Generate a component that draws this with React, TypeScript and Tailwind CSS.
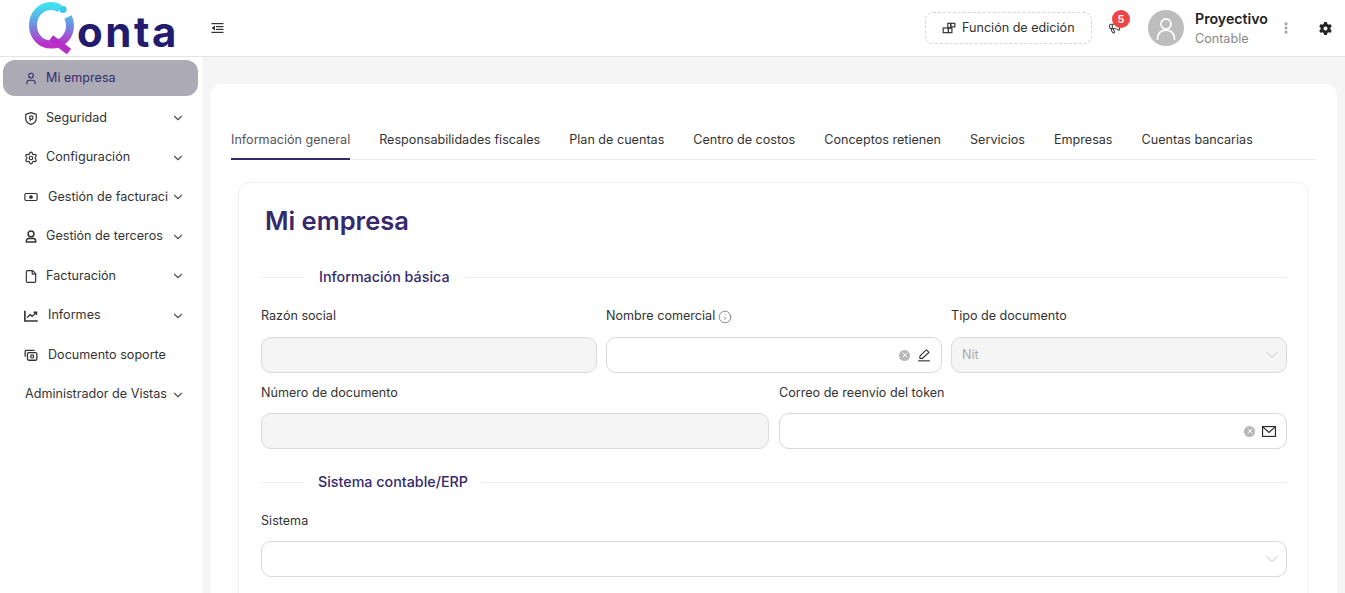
import { ReactNode } from "react";
import { ChevronDown, File, Info, Megaphone, Settings, User, X } from "lucide-react";
import { FaGear } from "react-icons/fa6";

const ShieldIcon = () => (
  <svg width="15" height="15" viewBox="0 0 24 24" fill="none" stroke="currentColor" strokeWidth="2" strokeLinejoin="round" strokeLinecap="round">
    <path d="M12 2 21 5v7c0 5-3.500 8.500-9 10-5.500-1.500-9-5-9-10V5z" />
    <circle cx="12.500" cy="10.500" r="3" />
    <path d="M10.500 16l.8-3" />
  </svg>
);

const BillIcon = () => (
  <svg width="14" height="14" viewBox="0 0 24 24" fill="none" stroke="currentColor" strokeWidth="2">
    <rect x="1.500" y="6" width="21" height="12" rx="2" />
    <circle cx="12" cy="12" r="2.200" fill="currentColor" />
  </svg>
);

const PersonIcon = () => (
  <svg width="15" height="15" viewBox="0 0 24 24" fill="none" stroke="currentColor" strokeWidth="2.600">
    <circle cx="12" cy="7.500" r="5" />
    <path d="M4 21.500v-2a4 4 0 0 1 4-4h8a4 4 0 0 1 4 4v2z" strokeLinejoin="round" />
  </svg>
);

const ChartIcon = () => (
  <svg width="15" height="15" viewBox="0 0 24 24" fill="none" stroke="currentColor" strokeWidth="2.800">
    <path d="M1.500 4v17.500h22" />
    <path d="M5.500 15.500l5-5 3.500 3 6.500-6.500" strokeWidth="2.400" />
    <path d="M16.500 6.500h5v4.500" strokeWidth="2.400" />
  </svg>
);

const CameraStackIcon = () => (
  <svg width="14" height="14" viewBox="0 0 24 24" fill="none" stroke="currentColor" strokeWidth="2.200" strokeLinejoin="round">
    <path d="M2 15V6a2 2 0 0 1 2-2h14" />
    <rect x="6" y="8" width="16" height="13" rx="2" />
    <circle cx="14" cy="14.500" r="2.600" />
  </svg>
);

const BlocksIcon = () => (
  <svg width="14" height="14" viewBox="0 0 24 24" fill="none" stroke="currentColor" strokeWidth="2">
    <rect x="2" y="12" width="9" height="8" />
    <rect x="11" y="12" width="6" height="8" />
    <rect x="10" y="4" width="5" height="8" />
    <rect x="15" y="4" width="7" height="6" />
  </svg>
);

const DotsIcon = () => (
  <svg width="4" height="12" viewBox="0 0 4 12" fill="none" stroke="#6b7280" strokeWidth="0.8">
    <circle cx="2" cy="1.800" r="1.100" />
    <circle cx="2" cy="6" r="1.100" />
    <circle cx="2" cy="10.200" r="1.100" />
  </svg>
);

const CollapseIcon = () => (
  <svg width="13" height="12" viewBox="0 0 13 12" fill="#333333" className="ml-[9px]">
    <rect x="0.500" y="1" width="12" height="1.200" />
    <rect x="5" y="4" width="7.500" height="1.200" />
    <rect x="5" y="6.800" width="7.500" height="1.200" />
    <rect x="0.500" y="9.800" width="12" height="1.200" />
    <path d="M4 3.500v5L0.500 6z" />
  </svg>
);

const PenIcon = () => (
  <svg width="14" height="14" viewBox="0 0 24 24" fill="none" stroke="#222222" strokeWidth="1.800" strokeLinejoin="round" className="ml-[7px]">
    <path d="M2 22h20" />
    <path d="M16 3l4.500 4.500L9 18H5v-4z" />
  </svg>
);

const MailIcon = () => (
  <svg width="14" height="11" viewBox="0 0 14 11" fill="none" stroke="#222222" strokeWidth="1.100" className="ml-[7px]">
    <rect x="0.600" y="0.600" width="12.800" height="9.800" />
    <path d="M0.800 0.800 7 6.500l6.200-5.700" />
  </svg>
);

const AvatarIcon = () => (
  <svg width="26" height="26" viewBox="0 0 26 26" fill="none" stroke="white" strokeWidth="1.800" strokeLinecap="round">
    <circle cx="13" cy="9" r="5" />
    <path d="M4.500 24c0-5.500 3.500-9 8.500-9s8.500 3.500 8.500 9" />
  </svg>
);

const Logo = () => (
  <div className="flex items-center w-[202px] pl-[28px] shrink-0">
    <svg width="50" height="54" viewBox="0 0 50 54" fill="none" className="shrink-0">
      <defs>
        <linearGradient id="qonta" x1="0" y1="0" x2="0" y2="1">
          <stop offset="0" stopColor="#3fe0f0" />
          <stop offset="0.500" stopColor="#6f8fe0" />
          <stop offset="1" stopColor="#c02cc8" />
        </linearGradient>
      </defs>
      <path d="M32 7.500C29 5.800 27 5 23.500 5 12 5 5 14 5 24.500S12.500 43.500 23.500 43.500 42 35 42 24.500c0-3.500-.8-6-2-8.500" stroke="url(#qonta)" strokeWidth="8" />
      <circle cx="35" cy="8.500" r="3.600" fill="#3fc8ee" />
      <path d="M23 37l18 13.500" stroke="#b42fc6" strokeWidth="7" />
    </svg>
    <span className="ml-[-1px] mt-[7px] text-[42px] leading-none font-bold tracking-[2.5px] text-[#231b6e]">onta</span>
  </div>
);

function NavItem({ icon, label, active, chevron = true, tight }: { icon?: ReactNode; label: string; active?: boolean; chevron?: boolean; tight?: boolean }) {
  return (
    <div className={`flex items-center h-9 pl-[21px] pr-[13px] rounded-xl ${active ? "mb-[0.5px] bg-[#acaab5] text-[#352a6b]" : "text-[#333333]"}`}>
      {icon && <span className="flex w-[14px] justify-center shrink-0">{icon}</span>}
      <span className={`flex-1 min-w-0 whitespace-nowrap overflow-hidden ${icon ? (tight ? "ml-[10px]" : "ml-[8px]") : "ml-px"}`}>{label}</span>
      {chevron && <ChevronDown size={14} className="ml-[3px] shrink-0 text-[#555555]" />}
    </div>
  );
}

const Sidebar = () => (
  <aside className="w-[202px] shrink-0 bg-white pl-[3px] pr-[4px] pt-[3px] flex flex-col gap-[3.5px]">
    <NavItem active chevron={false} icon={<User size={15} strokeWidth={1.8} />} label="Mi empresa" />
    <NavItem icon={<ShieldIcon />} label="Seguridad" />
    <NavItem icon={<Settings size={14} />} label="Configuración" />
    <NavItem tight icon={<BillIcon />} label="Gestión de facturación" />
    <NavItem icon={<PersonIcon />} label="Gestión de terceros" />
    <NavItem icon={<File size={15} />} label="Facturación" />
    <NavItem tight icon={<ChartIcon />} label="Informes" />
    <NavItem tight chevron={false} icon={<CameraStackIcon />} label="Documento soporte" />
    <NavItem label="Administrador de Vistas" />
  </aside>
);

const Header = () => (
  <header className="h-[57px] shrink-0 flex items-center bg-white border-b border-[#e3e3e3]">
    <Logo />
    <CollapseIcon />
    <div className="ml-auto flex items-center">
      <div className="flex items-center gap-[6px] h-8 w-[167px] pl-[16px] border border-dashed border-[#d6d6d6] rounded-lg text-[#333333]">
        <BlocksIcon />
        <span>Función de edición</span>
      </div>
      <div className="relative ml-[16px] w-[13px] h-[14px] text-[#444444]">
        <Megaphone size={13} />
        <span className="absolute left-[4px] top-[-11px] flex items-center justify-center w-[18px] h-[18px] rounded-full bg-[#ef4444] text-white text-[11px] font-semibold">5</span>
      </div>
      <div className="ml-[27px] flex items-center justify-center w-9 h-9 rounded-full bg-[#bdbdbd] overflow-hidden">
        <AvatarIcon />
      </div>
      <div className="ml-[11px] pt-px flex flex-col">
        <span className="text-[14.2px] leading-[18px] font-semibold text-[#222222]">Proyectivo</span>
        <span className="leading-[18px] text-[#888888] mt-[2px]">Contable</span>
      </div>
      <span className="ml-[16px] flex"><DotsIcon /></span>
      <FaGear size={13} className="ml-[31px] mr-[13px] text-[#222222]" />
    </div>
  </header>
);

const TABS = [
  "Información general",
  "Responsabilidades fiscales",
  "Plan de cuentas",
  "Centro de costos",
  "Conceptos retienen",
  "Servicios",
  "Empresas",
  "Cuentas bancarias",
];

const Tabs = () => (
  <div className="flex gap-[29px] h-[40px] border-b border-[#ececec] text-[#333333]">
    {TABS.map((t, i) => (
      <div key={t} className={`flex items-center h-[40px] whitespace-nowrap ${i === 0 ? "pt-[2px] border-b-2 border-[#352a6b] text-[#555555]" : ""}`}>
        {t}
      </div>
    ))}
  </div>
);

const SectionTitle = ({ label, pad }: { label: string; pad: string }) => (
  <div className="flex items-center h-5">
    <div className="w-[43px] h-px bg-[#efefef]" />
    <span className={`${pad} text-[14.3px] font-medium text-[#352a6b] whitespace-nowrap`}>{label}</span>
    <div className="flex-1 h-px bg-[#efefef]" />
  </div>
);

const ClearDot = () => (
  <span className="flex items-center justify-center w-[11px] h-[11px] rounded-full bg-[#b8b8b8] text-white">
    <X size={8} strokeWidth={3} />
  </span>
);

function Field({ label, info, disabled, close, children }: { label: string; info?: boolean; disabled?: boolean; close?: boolean; children?: ReactNode }) {
  return (
    <div className="flex flex-col min-w-0">
      <div className="flex items-center gap-[3px] h-5 text-[#333333]">
        {label}
        {info && <Info size={14} strokeWidth={1} className="text-[#444444]" />}
      </div>
      <div className={`${close ? "mt-[9.5px]" : "mt-[10.5px]"} flex items-center justify-end h-9 pl-[10px] pr-[10px] border border-[#d9d9d9] rounded-[10px] ${disabled ? "bg-[#f5f5f5]" : "bg-white"}`}>
        {children}
      </div>
    </div>
  );
}

const SelectChevron = () => <ChevronDown size={20} strokeWidth={1.1} className="mr-[-6px] text-[#bbbbbb]" />;

export default function App() {
  return (
    <div className="h-[593px] w-[1345px] overflow-hidden flex flex-col bg-white text-[12.6px] font-['Inter',sans-serif]">
      <Header />
      <div className="flex flex-1 min-h-0">
        <Sidebar />
        <main className="flex-1 min-w-0 bg-[#f5f5f5] pl-[8px] pr-[8px] pt-[27px]">
          <div className="bg-white rounded-t-xl pl-[21px] pr-[21px] pt-[36px]">
            <Tabs />
            <section className="ml-[7px] mr-[7px] mt-[22px] border border-[#f2f2f2] rounded-xl pl-[22px] pr-[21px] pt-[20px] pb-[60px]">
              <h1 className="ml-[4px] text-[25.5px] leading-[36px] font-semibold text-[#352a6b]">Mi empresa</h1>
              <div className="mt-[28px]">
                <SectionTitle label="Información básica" pad="pl-[15px] pr-[15px]" />
              </div>
              <div className="mt-[19.5px] grid grid-cols-3 gap-x-[9px]">
                <Field label="Razón social" disabled />
                <Field label="Nombre comercial" info>
                  <ClearDot />
                  <PenIcon />
                </Field>
                <Field label="Tipo de documento" disabled>
                  <span className="flex-1 text-[#aaaaaa]">Nit</span>
                  <SelectChevron />
                </Field>
              </div>
              <div className="mt-[10.5px] grid grid-cols-2 gap-x-[10px]">
                <Field close label="Número de documento" disabled />
                <Field close label="Correo de reenvío del token">
                  <ClearDot />
                  <MailIcon />
                </Field>
              </div>
              <div className="mt-[23px]">
                <SectionTitle label="Sistema contable/ERP" pad="pl-[14px] pr-[13px]" />
              </div>
              <div className="mt-[19.5px]">
                <Field close label="Sistema">
                  <SelectChevron />
                </Field>
              </div>
            </section>
          </div>
        </main>
      </div>
    </div>
  );
}
